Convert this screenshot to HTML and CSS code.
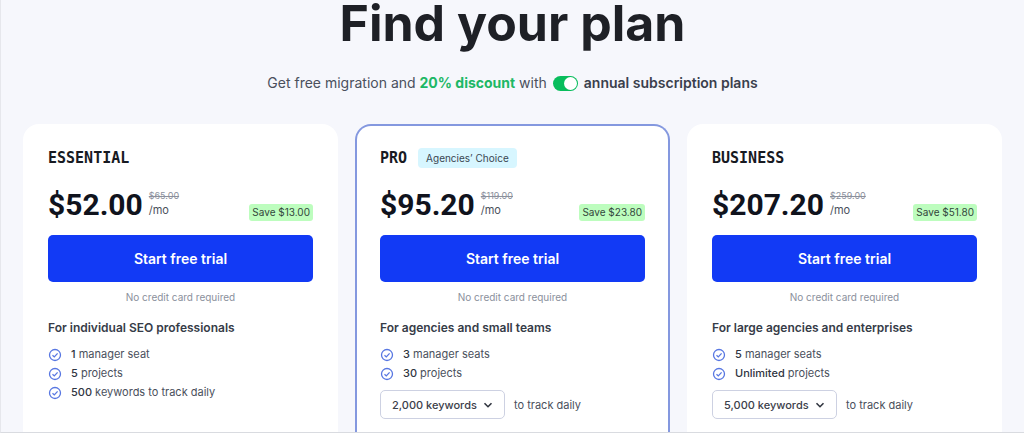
FILE: index.html
```html
<!DOCTYPE html>
<html lang="en">
<head>
<meta charset="utf-8">
<meta name="viewport" content="width=device-width, initial-scale=1">
<title>Find your plan</title>
<link rel="stylesheet" href="styles.css">
</head>
<body>
<svg class="sprite" aria-hidden="true">
  <symbol id="check" viewBox="0 0 14 14">
    <circle cx="7" cy="7" r="5.5"/>
    <path d="M4.5 7.200 6.300 8.900 9.600 5.400"/>
  </symbol>
  <symbol id="chevron" viewBox="0 0 10 10">
    <path d="M1.500 3.200 5 6.700 8.500 3.200"/>
  </symbol>
</svg>
<main class="page">
  <header class="intro">
    <h1 class="title">Find your plan</h1>
    <div class="offer">
      <span>Get free migration and <strong class="discount">20% discount</strong> with</span>
      <input class="switch" type="checkbox" role="switch" id="annual" checked>
      <label class="annual" for="annual">annual subscription plans</label>
    </div>
  </header>
  <div class="plans">
    <section class="card">
      <div class="card-head"><h2 class="name">ESSENTIAL</h2></div>
      <div class="pricing">
        <span class="price">$52.00</span>
        <span class="per"><s class="old">$65.00</s><span>/mo</span></span>
        <span class="save">Save $13.00</span>
      </div>
      <button class="cta" type="button">Start free trial</button>
      <p class="note">No credit card required</p>
      <h3 class="audience">For individual SEO professionals</h3>
      <ul class="features">
        <li><svg class="check"><use href="#check"/></svg><span><b>1</b> manager seat</span></li>
        <li><svg class="check"><use href="#check"/></svg><span><b>5</b> projects</span></li>
        <li><svg class="check"><use href="#check"/></svg><span><b>500</b> keywords to track daily</span></li>
      </ul>
    </section>
    <section class="card featured">
      <div class="card-head"><h2 class="name">PRO</h2><span class="badge">Agencies’ Choice</span></div>
      <div class="pricing">
        <span class="price">$95.20</span>
        <span class="per"><s class="old">$119.00</s><span>/mo</span></span>
        <span class="save">Save $23.80</span>
      </div>
      <button class="cta" type="button">Start free trial</button>
      <p class="note">No credit card required</p>
      <h3 class="audience">For agencies and small teams</h3>
      <ul class="features">
        <li><svg class="check"><use href="#check"/></svg><span><b>3</b> manager seats</span></li>
        <li><svg class="check"><use href="#check"/></svg><span><b>30</b> projects</span></li>
      </ul>
      <div class="quota">
        <span class="picker">
          <select class="select" id="pro-keywords"><option>2,000 keywords</option></select>
          <svg class="chevron"><use href="#chevron"/></svg>
        </span>
        <label for="pro-keywords">to track daily</label>
      </div>
    </section>
    <section class="card">
      <div class="card-head"><h2 class="name">BUSINESS</h2></div>
      <div class="pricing">
        <span class="price">$207.20</span>
        <span class="per"><s class="old">$259.00</s><span>/mo</span></span>
        <span class="save">Save $51.80</span>
      </div>
      <button class="cta" type="button">Start free trial</button>
      <p class="note">No credit card required</p>
      <h3 class="audience">For large agencies and enterprises</h3>
      <ul class="features">
        <li><svg class="check"><use href="#check"/></svg><span><b>5</b> manager seats</span></li>
        <li><svg class="check"><use href="#check"/></svg><span><b>Unlimited</b> projects</span></li>
      </ul>
      <div class="quota">
        <span class="picker">
          <select class="select" id="business-keywords"><option>5,000 keywords</option></select>
          <svg class="chevron"><use href="#chevron"/></svg>
        </span>
        <label for="business-keywords">to track daily</label>
      </div>
    </section>
  </div>
</main>
</body>
</html>
```

FILE: styles.css
```css
* { box-sizing: border-box; margin: 0; }

body {
  font: 11px/20px Inter, "Liberation Sans", sans-serif;
  color: #4a505c;
  background: #f6f7fc;
}

.sprite { display: none; }

.page {
  display: flex;
  flex-direction: column;
  min-height: 100vh;
  padding: 0 22px;
  border-left: 1px solid #e6e7ec;
  border-bottom: 1px solid #d9dbe0;
}

.intro { text-align: center; }

.title {
  font-size: 50px;
  line-height: 46px;
  font-weight: 700;
  color: #1e2026;
}

.offer {
  display: flex;
  justify-content: center;
  align-items: center;
  gap: 6px;
  padding: 25px 0 29px;
  font-size: 14px;
  line-height: 24px;
}

.discount { font-weight: 700; color: #1db866; }
.annual { font-weight: 600; color: #3a404c; }

.switch {
  appearance: none;
  display: flex;
  justify-content: flex-end;
  width: 25px;
  height: 15px;
  margin: 0;
  padding: 1px;
  border-radius: 8px;
  background: #08bd5c;
}

.switch::before {
  content: "";
  width: 13px;
  height: 13px;
  border-radius: 50%;
  background: #fff;
}

.switch:not(:checked) { justify-content: flex-start; background: #a9afba; }

.plans {
  flex: 1;
  display: grid;
  grid-template-columns: repeat(3, 1fr);
  gap: 17px;
}

.card {
  padding: 22px 23px 12px;
  border: 2px solid #fff;
  border-bottom: 0;
  border-radius: 16px 16px 0 0;
  background: #fff;
}

.featured { border-color: #8498df; }

.card-head {
  display: flex;
  align-items: center;
  gap: 11px;
}

.name {
  font: 700 15px/20px "DejaVu Sans Mono", monospace;
  color: #171a22;
}

.badge {
  padding: 0 8px;
  border-radius: 4px;
  background: #d7f6ff;
  font-size: 10px;
  color: #3a4652;
}

.pricing {
  display: flex;
  align-items: flex-end;
  gap: 6px;
  padding: 19px 0 12px;
}

.price {
  font: 700 30px/36px Roboto, "Liberation Sans", sans-serif;
  color: #10131d;
}

.per {
  display: flex;
  flex-direction: column;
  padding-bottom: 6px;
  line-height: 14px;
}

.old { font-size: 9px; color: #8b909c; }

.save {
  margin-bottom: 2px;
  margin-left: auto;
  padding: 0 3px;
  border-radius: 3px;
  background: #bdfdbe;
  font-size: 10px;
  line-height: 17px;
  color: #33463c;
}

.cta {
  display: block;
  width: 100%;
  height: 47px;
  border: 0;
  border-radius: 5px;
  background: #123af5;
  font: 600 14px/20px Inter, "Liberation Sans", sans-serif;
  color: #fff;
}

.note {
  padding: 5px 0 11px;
  text-align: center;
  font-size: 10px;
  color: #8a909c;
}

.audience {
  font-size: 12px;
  line-height: 20px;
  font-weight: 600;
  color: #363c48;
}

.features {
  padding: 7px 0 0;
  list-style: none;
}

.features li {
  display: flex;
  align-items: center;
  gap: 9px;
  line-height: 19px;
}

.features b { font-weight: 500; color: #30353f; }

.check {
  width: 14px;
  height: 14px;
  fill: none;
  stroke: #5877e2;
  stroke-width: 1.3;
}

.quota {
  display: flex;
  align-items: center;
  gap: 9px;
  padding-top: 7px;
}

.picker { display: grid; align-items: center; }
.picker > * { grid-area: 1 / 1; }

.select {
  appearance: none;
  height: 29px;
  padding: 0 27px 0 11px;
  border: 1px solid #cdd1e2;
  border-radius: 5px;
  background: #fff;
  font: 500 11px/20px Inter, "Liberation Sans", sans-serif;
  color: #3b404a;
}

.chevron {
  justify-self: end;
  width: 10px;
  height: 10px;
  margin-right: 12px;
  fill: none;
  stroke: #30353f;
  stroke-width: 1.6;
  pointer-events: none;
}
```
